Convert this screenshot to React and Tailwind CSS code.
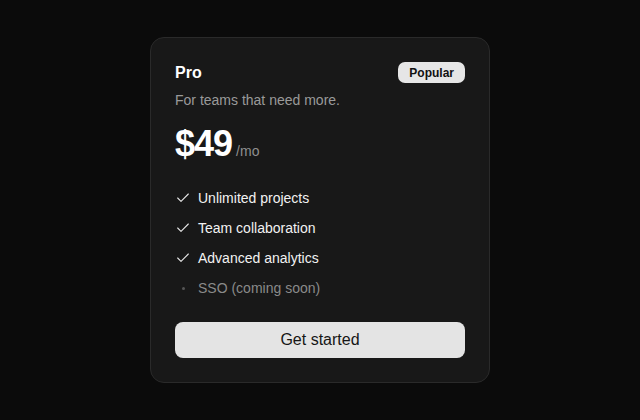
import { Check } from "lucide-react";

const features = [
    { label: "Unlimited projects", included: true },
    { label: "Team collaboration", included: true },
    { label: "Advanced analytics", included: true },
    { label: "SSO (coming soon)", included: false },
];

export default function App() {
    return (
        <div
            className="w-[640px] h-[420px] bg-[#0b0b0b] flex items-center justify-center"
            style={{ fontFamily: '"Liberation Sans", Arial, sans-serif' }}
        >
            <div className="w-[340px] rounded-[14px] border border-[#2a2a2a] bg-[#181818] p-[24px] flex flex-col">
                <div className="flex items-center justify-between h-[21px]">
                    <span className="text-[16px] font-bold text-white leading-none">Pro</span>
                    <span className="h-[21px] px-[11px] flex items-center rounded-[7px] bg-[#e6e6e6] text-[12px] font-bold text-[#111]">
                        Popular
                    </span>
                </div>
                <p className="mt-[7px] text-[14px] leading-5 text-[#9a9a9a]">For teams that need more.</p>
                <div className="mt-[14px] flex items-baseline gap-[4px] h-[40px]">
                    <span className="text-[36px] leading-[40px] font-bold text-white tracking-[-1px]">$49</span>
                    <span className="text-[14px] text-[#8f8f8f]">/mo</span>
                </div>
                <ul className="mt-[24px] flex flex-col gap-[10px]">
                    {features.map((f) => (
                        <li key={f.label} className="flex items-center h-5 gap-[7px]">
                            <span className="w-[16px] flex items-center justify-center">
                                {f.included ? (
                                    <Check size={16} strokeWidth={1.6} className="text-[#e8e8e8]" />
                                ) : (
                                    <span className="w-[3px] h-[3px] rounded-full bg-[#555]" />
                                )}
                            </span>
                            <span className={f.included ? "text-[14px] text-[#f2f2f2]" : "text-[14px] text-[#8a8a8a]"}>
                                {f.label}
                            </span>
                        </li>
                    ))}
                </ul>
                <button className="mt-6 h-[36px] w-full rounded-[8px] bg-[#e4e4e4] text-[16px] text-[#161616]">
                    Get started
                </button>
            </div>
        </div>
    );
}
